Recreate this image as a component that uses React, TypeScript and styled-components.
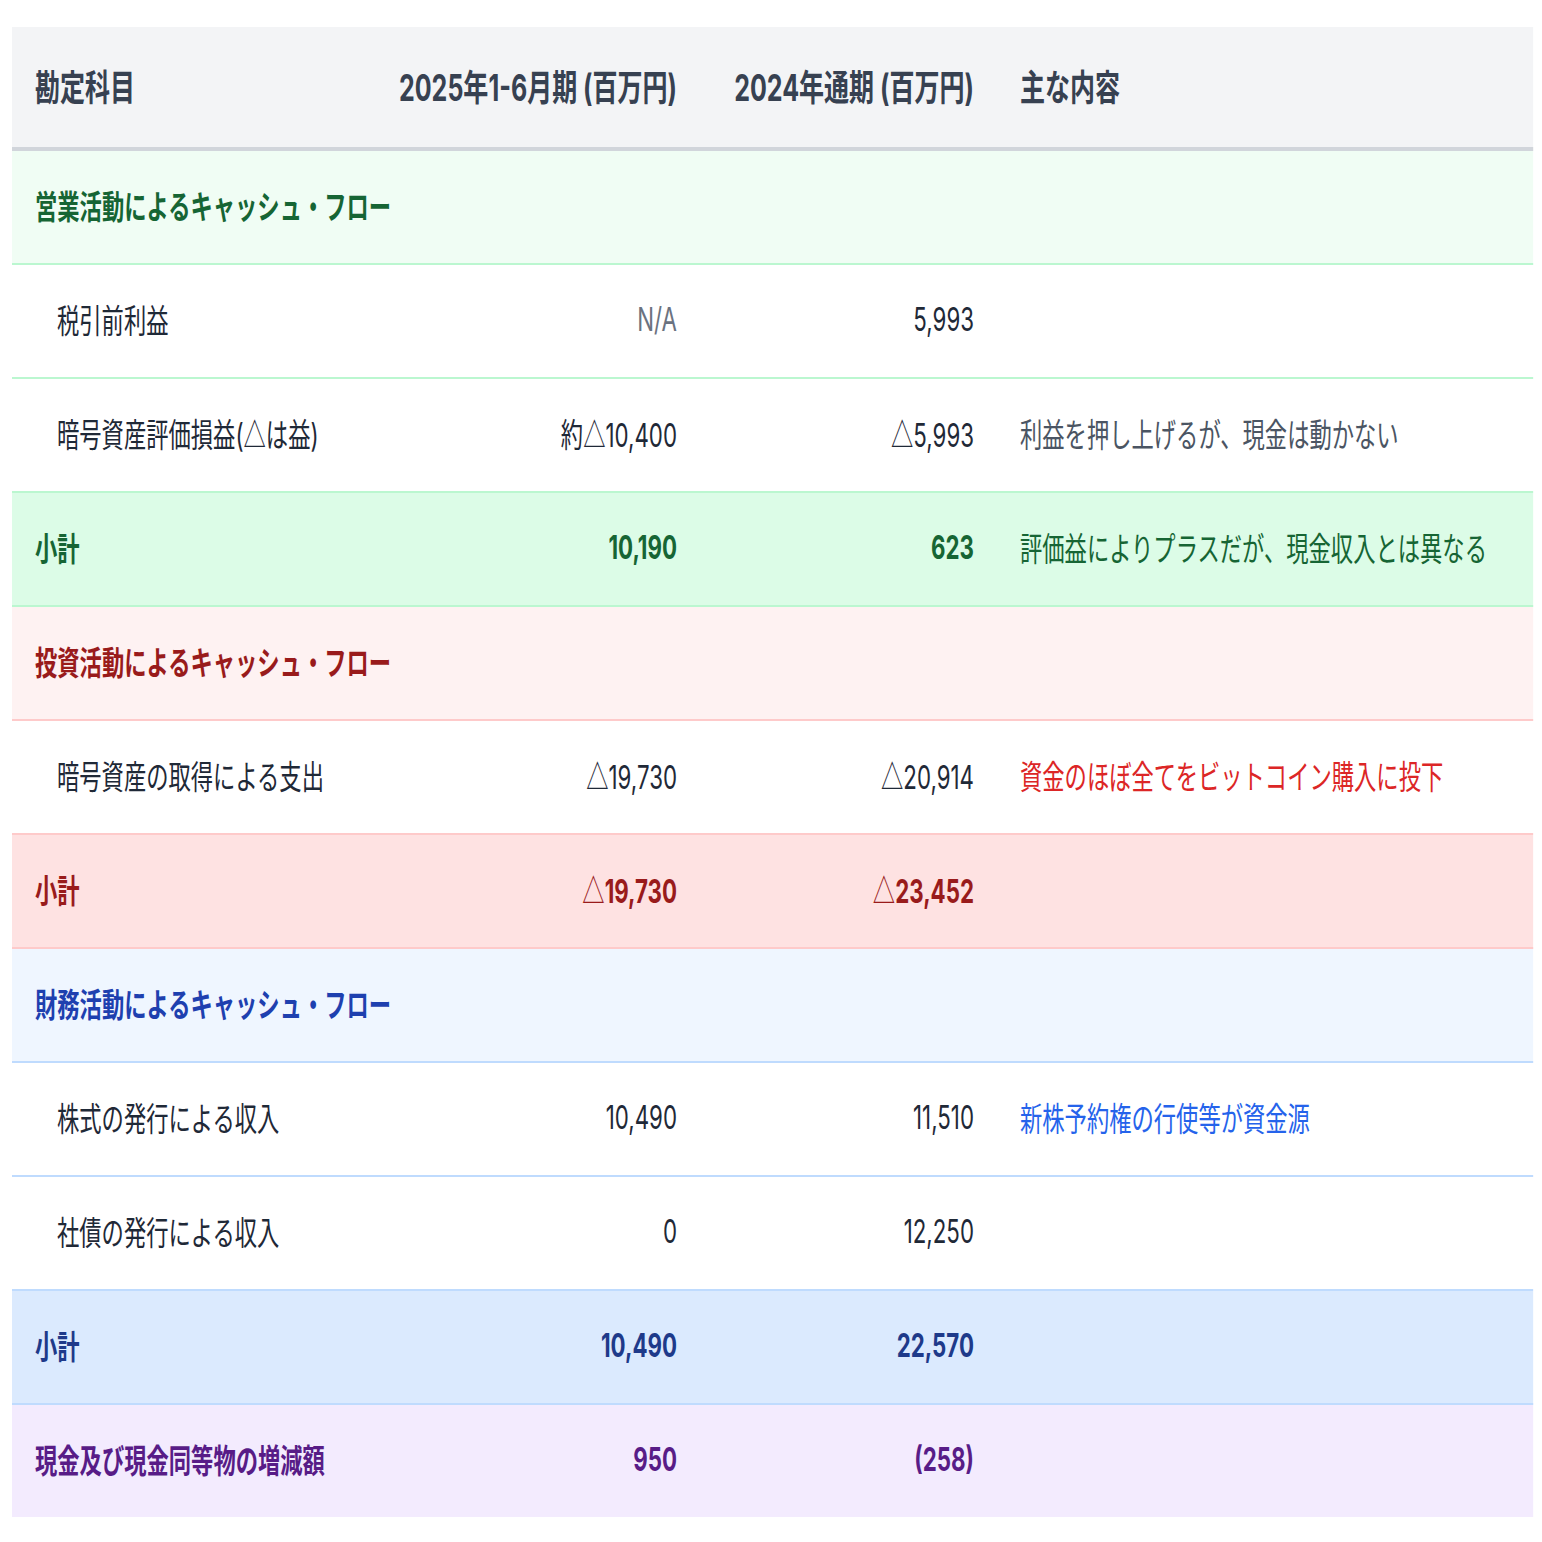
import styled, { createGlobalStyle } from "styled-components";

const Global = createGlobalStyle`
  body {
    margin: 0;
    background: #ffffff;
  }
`;

type Tone = "green" | "red" | "blue" | "purple";
type Kind = "section" | "item" | "subtotal" | "total";

const tones: Record<
  Tone,
  { line: string; head: string; sub: string; ink: string; subInk: string }
> = {
  green: { line: "#bbf7d0", head: "#f0fdf4", sub: "#dcfce7", ink: "#166534", subInk: "#166534" },
  red: { line: "#fecaca", head: "#fef2f2", sub: "#fee2e2", ink: "#991b1b", subInk: "#991b1b" },
  blue: { line: "#bfdbfe", head: "#eff6ff", sub: "#dbeafe", ink: "#1e40af", subInk: "#1e3a8a" },
  purple: { line: "transparent", head: "#f3e8ff", sub: "#f3ebfe", ink: "#581c87", subInk: "#581c87" },
};

// the shot is squeezed sideways, so the table is laid out wide and scaled down
const SQUEEZE = 0.68;

const Page = styled.div`
  padding: 27px 12px 25px;
  overflow: hidden;
`;

const Frame = styled.div`
  width: ${1521 / SQUEEZE}px;
  transform: scaleX(${SQUEEZE});
  transform-origin: 0 0;
  font-family: Inter, "Noto Sans CJK JP", sans-serif;
`;

const cols = `${364 / SQUEEZE}px ${324 / SQUEEZE}px ${297 / SQUEEZE}px 1fr`;
const padX = 23 / SQUEEZE;

const Head = styled.div`
  display: grid;
  grid-template-columns: ${cols};
  align-items: center;
  box-sizing: border-box;
  height: 124px;
  padding-bottom: 4px;
  background: #f3f4f6;
  border-bottom: 4px solid #d1d5db;
  color: #374151;
  font-size: 36.8px;
  font-weight: 700;
`;

const HeadCell = styled.div<{ $num?: boolean }>`
  padding: 0 ${padX}px;
  text-align: ${(p) => (p.$num ? "right" : "left")};
  white-space: nowrap;
`;

const Row = styled.div<{ $tone: Tone; $kind: Kind; $last?: boolean }>`
  display: grid;
  grid-template-columns: ${cols};
  align-items: center;
  box-sizing: border-box;
  height: ${(p) => (p.$last ? 112 : 114)}px;
  padding-bottom: 5px;
  font-size: 32.8px;
  background: ${(p) =>
    p.$kind === "section" ? tones[p.$tone].head : p.$kind === "item" ? "#ffffff" : tones[p.$tone].sub};
  border-bottom: ${(p) => (p.$last ? "none" : `2px solid ${tones[p.$tone].line}`)};
  color: ${(p) =>
    p.$kind === "item" ? "#1f2937" : p.$kind === "section" ? tones[p.$tone].ink : tones[p.$tone].subInk};
  font-weight: ${(p) => (p.$kind === "item" ? 400 : 700)};
`;

const Label = styled.div<{ $indent?: boolean; $span?: boolean }>`
  padding: 0 ${padX}px 0 ${(p) => (p.$indent ? padX + 22 / SQUEEZE : padX)}px;
  white-space: nowrap;
  ${(p) => (p.$span ? "grid-column: 1 / -1;" : "")}
`;

const Num = styled.div<{ $muted?: boolean }>`
  padding: 0 ${padX}px;
  text-align: right;
  white-space: nowrap;
  color: ${(p) => (p.$muted ? "#6b7280" : "inherit")};
`;

const Tri = styled.span`
  font-family: "Noto Sans CJK JP", sans-serif;
  font-weight: 400;
`;

const Note = styled.div<{ $color: string }>`
  padding: 0 ${padX}px;
  white-space: nowrap;
  font-weight: 400;
  color: ${(p) => p.$color};
`;

type Line = {
  tone: Tone;
  kind: Kind;
  label: string;
  a?: string;
  b?: string;
  note?: string;
  noteColor?: string;
  muted?: boolean;
};

const lines: Line[] = [
  { tone: "green", kind: "section", label: "営業活動によるキャッシュ・フロー" },
  { tone: "green", kind: "item", label: "税引前利益", a: "N/A", b: "5,993", muted: true },
  {
    tone: "green",
    kind: "item",
    label: "暗号資産評価損益(△は益)",
    a: "約△10,400",
    b: "△5,993",
    note: "利益を押し上げるが、現金は動かない",
    noteColor: "#4b5563",
  },
  {
    tone: "green",
    kind: "subtotal",
    label: "小計",
    a: "10,190",
    b: "623",
    note: "評価益によりプラスだが、現金収入とは異なる",
    noteColor: "#166534",
  },
  { tone: "red", kind: "section", label: "投資活動によるキャッシュ・フロー" },
  {
    tone: "red",
    kind: "item",
    label: "暗号資産の取得による支出",
    a: "△19,730",
    b: "△20,914",
    note: "資金のほぼ全てをビットコイン購入に投下",
    noteColor: "#dc2626",
  },
  { tone: "red", kind: "subtotal", label: "小計", a: "△19,730", b: "△23,452" },
  { tone: "blue", kind: "section", label: "財務活動によるキャッシュ・フロー" },
  {
    tone: "blue",
    kind: "item",
    label: "株式の発行による収入",
    a: "10,490",
    b: "11,510",
    note: "新株予約権の行使等が資金源",
    noteColor: "#2563eb",
  },
  { tone: "blue", kind: "item", label: "社債の発行による収入", a: "0", b: "12,250" },
  { tone: "blue", kind: "subtotal", label: "小計", a: "10,490", b: "22,570" },
  { tone: "purple", kind: "total", label: "現金及び現金同等物の増減額", a: "950", b: "(258)" },
];

// △ comes from the CJK face, as in the source
const withTri = (s?: string) =>
  s?.split(/(△)/).map((part, i) => (part === "△" ? <Tri key={i}>△</Tri> : part));

export default function App() {
  return (
    <>
      <Global />
      <Page>
        <Frame>
          <Head>
            <HeadCell>勘定科目</HeadCell>
            <HeadCell $num>2025年1-6月期 (百万円)</HeadCell>
            <HeadCell $num>2024年通期 (百万円)</HeadCell>
            <HeadCell>主な内容</HeadCell>
          </Head>
          {lines.map((l, i) => (
            <Row key={i} $tone={l.tone} $kind={l.kind} $last={i === lines.length - 1}>
              {l.kind === "section" ? (
                <Label $span>{l.label}</Label>
              ) : (
                <>
                  <Label $indent={l.kind === "item"}>{withTri(l.label)}</Label>
                  <Num $muted={l.muted}>{withTri(l.a)}</Num>
                  <Num>{withTri(l.b)}</Num>
                  <Note $color={l.noteColor ?? "inherit"}>{l.note}</Note>
                </>
              )}
            </Row>
          ))}
        </Frame>
      </Page>
    </>
  );
}
